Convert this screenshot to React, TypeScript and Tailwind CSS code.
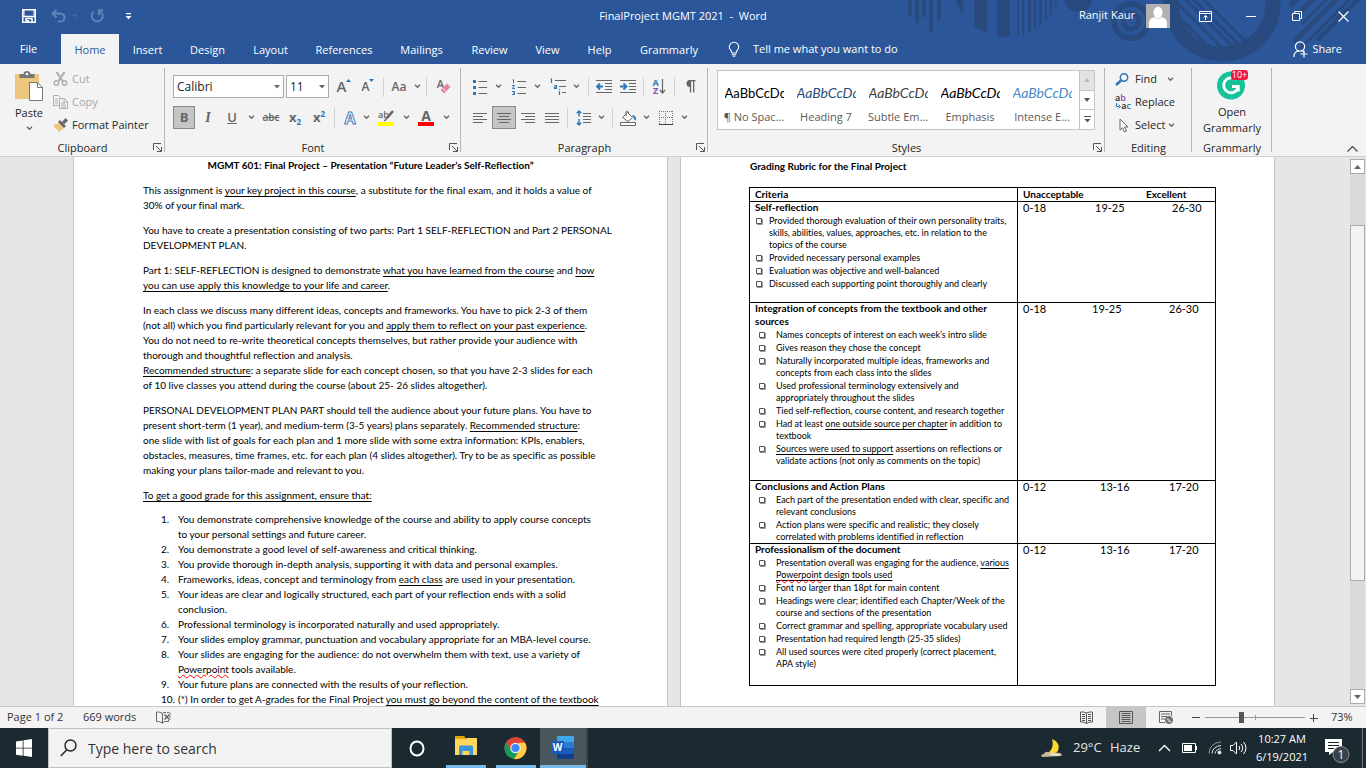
import type { ReactNode } from 'react'

const CHEVRON = 'M1 1l3 3 3-3'

function Chevron({ className = 'w-4' }: { className?: string }) {
  return (
    <button aria-label="More options" className={`${className} h-full flex items-center justify-center shrink-0`}>
      <svg width="7" height="5" viewBox="0 0 8 6" fill="none" stroke="#666" strokeWidth="1.6">
        <path d={CHEVRON} />
      </svg>
    </button>
  )
}

interface ToolProps {
  label: string
  className?: string
  active?: boolean
  children: ReactNode
}

function Tool({ label, className = 'w-6', active = false, children }: ToolProps) {
  return (
    <button
      aria-label={label}
      className={`${className} h-[23px] shrink-0 flex items-center justify-center text-[#666] ${
        active ? 'bg-[#c5c5c5] border border-[#8a8a8a]' : ''
      }`}
    >
      {children}
    </button>
  )
}

function Divider() {
  return <span className="w-px h-5 bg-[#d2d2d2] mx-[3px] shrink-0" />
}

function Group({ label, className, launcher = false, children }: { label: string; className: string; launcher?: boolean; children: ReactNode }) {
  return (
    <section aria-label={label} className={`${className} shrink-0 relative flex flex-col`}>
      <div className="flex-1">{children}</div>
      <div className="h-4 text-center leading-4">{label}</div>
      {launcher && (
        <button aria-label={`${label} settings`} className="absolute right-[3px] bottom-1">
          <svg width="9" height="9" viewBox="0 0 9 9" fill="none" stroke="#555">
            <path d="M.5 7V.5H8M3 3l5 5M8.500 4v4.500H4" />
          </svg>
        </button>
      )}
      <span className="absolute right-0 top-1 bottom-1 w-px bg-[#b5b5b5]" />
    </section>
  )
}

function Lines({ rows, width = 14 }: { rows: [number, number][]; width?: number }) {
  return (
    <svg width={width} height="12" viewBox={`0 0 ${width} 12`} stroke="#666">
      {rows.map(([from, to], i) => (
        <path key={i} d={`M${from} ${i * 3 + 1.5}H${to}`} />
      ))}
    </svg>
  )
}

const tabs = [
  { name: 'Home', width: 'w-[58px]' },
  { name: 'Insert', width: 'w-[57px]' },
  { name: 'Design', width: 'w-[63px]' },
  { name: 'Layout', width: 'w-[63px]' },
  { name: 'References', width: 'w-[84px]' },
  { name: 'Mailings', width: 'w-[71px]' },
  { name: 'Review', width: 'w-[65px]' },
  { name: 'View', width: 'w-[51px]' },
  { name: 'Help', width: 'w-[53px]' },
  { name: 'Grammarly', width: 'w-[86px]' },
]

function HeaderArt() {
  return (
    <svg className="absolute right-0 top-0" width="466" height="64" viewBox="900 0 466 64" fill="#284a7e" stroke="none">
      <defs>
        <clipPath id="stripeDisc">
          <circle cx="1007" cy="-17" r="54" />
        </clipPath>
        <clipPath id="ringHole">
          <circle cx="1222" cy="3" r="45" />
        </clipPath>
      </defs>
      <path d="M908 0h4v16h-4zM915 0h4v23h-4zM922 0h4v17h-4zM929 0h4v32h-4zM937 0h4v20h-4z" />
      <g clipPath="url(#stripeDisc)">
        <path d="M950 0h13v40h-13zM974 0h13v40h-13zM997 0h13v40h-13zM1017 0h2v40h-2zM1022 0h2v40h-2zM1028 0h3v40h-3zM1034 0h2v40h-2zM1039 0h3v40h-3zM1045 0h2v40h-2zM1050 0h2v40h-2zM1055 0h2v40h-2z" />
      </g>
      <circle cx="1078.500" cy="-2" r="14" />
      <g fill="none" stroke="#284a7e">
        <circle cx="1131" cy="21" r="17" strokeWidth="6" />
        <circle cx="1131" cy="21" r="8" strokeWidth="5" />
        <circle cx="1222" cy="3" r="51" strokeWidth="15" />
        <g clipPath="url(#ringHole)" strokeWidth="3">
          <path d="M1170 8l50 50M1176 2l54 54M1182 -4l56 56M1190 -4l54 54M1199 -5l54 54" />
        </g>
        <path strokeWidth="5" d="M1290 6l10-10M1295 17l22-22M1294 42l46-46M1317 40l44-44" />
        <path strokeWidth="3" d="M1302 24l28-28M1301 48l50-50" />
      </g>
    </svg>
  )
}

function TitleBar() {
  return (
    <header className="relative bg-[#2b579a] text-white text-[11px] shrink-0">
      <HeaderArt />
      <div className="relative h-[34px] flex items-start">
        <div className="flex-1 flex items-center h-8">
          <button aria-label="Save" className="ml-[22px]">
            <svg width="14" height="14" viewBox="0 0 14 14" fill="none" stroke="#fff" strokeWidth="1.500">
              <path d="M.75.75h12.500v12.500H.75zM.75 7.500h12.500" />
              <path d="M2 .8v6M12 .8v6" strokeWidth="1" />
              <path d="M4 13V9.500h6V13" />
              <path d="M5 11h2v2H5z" fill="#fff" stroke="none" />
            </svg>
          </button>
          <button aria-label="Undo" className="ml-[15px]">
            <svg width="15" height="14" viewBox="0 0 15 14" fill="none" stroke="#6083b8" strokeWidth="2">
              <path d="M5.500 1L1.500 4.500l4 4M2 4.500h7c6 0 6 8 0 8H7" />
            </svg>
          </button>
          <svg className="ml-[6px]" width="6" height="4" viewBox="0 0 8 6" fill="none" stroke="#6083b8" strokeWidth="1.500">
            <path d={CHEVRON} />
          </svg>
          <button aria-label="Redo" className="ml-[12px]">
            <svg width="15" height="14" viewBox="0 0 15 14" fill="none" stroke="#6083b8" strokeWidth="2">
              <path d="M4 2.500a5.500 5.500 0 1 0 6.500 0M13 1.200H9v5" />
            </svg>
          </button>
          <button aria-label="Customize Quick Access Toolbar" className="ml-5">
            <svg width="7" height="7" viewBox="0 0 7 7" fill="#fff">
              <path d="M1 0h5v1.200H1zM.5 3h6L3.500 6.200z" />
            </svg>
          </button>
        </div>
        <h1 className="h-8 leading-8 whitespace-pre">FinalProject MGMT 2021  -  Word</h1>
        <div className="flex-1 flex items-center justify-end h-8">
          <span className="pb-0.5">Ranjit Kaur</span>
          <svg className="ml-[11px]" width="24" height="24" viewBox="0 0 24 24">
            <path fill="#b1b1b1" d="M0 0h24v24H0z" />
            <path fill="#fff" d="M3 24v-4.500Q3 14 8 13.200h8q5 .8 5 6.300V24z" />
            <ellipse cx="12" cy="8.500" rx="4.800" ry="6" fill="#fff" stroke="#b1b1b1" strokeWidth=".5" />
          </svg>
          <button aria-label="Ribbon display options" className="w-[46px] ml-3 flex justify-center">
            <svg width="13" height="11" viewBox="0 0 13 11" fill="none" stroke="#fff">
              <path d="M.5.5h12v10H.5zM.5 2.500h12M6.500 9V4.500M4.500 6.500l2-2 2 2" />
            </svg>
          </button>
          <button aria-label="Minimize" className="w-[46px] flex justify-center">
            <span className="w-[10px] h-px bg-white" />
          </button>
          <button aria-label="Restore" className="w-[46px] flex justify-center">
            <svg width="10" height="10" viewBox="0 0 10 10" fill="none" stroke="#fff">
              <path d="M.5 2.500h7v7h-7zM2.500 2V.5h7v7H8" />
            </svg>
          </button>
          <button aria-label="Close" className="w-[46px] flex justify-center">
            <svg width="11" height="11" viewBox="0 0 11 11" stroke="#fff" strokeWidth="1.200">
              <path d="M.5.5l10 10M10.500.5l-10 10" />
            </svg>
          </button>
        </div>
      </div>
      <nav className="relative h-[30px] flex items-center">
        <button className="w-[61px] h-full pr-1">File</button>
        {tabs.map((tab) => (
          <button
            key={tab.name}
            className={`${tab.width} h-full pt-0.5 shrink-0 ${tab.name === 'Home' ? 'bg-[#f3f3f3] text-[#2b579a]' : ''}`}
          >
            {tab.name}
          </button>
        ))}
        <button className="flex items-center ml-4 h-full">
          <svg width="12" height="17" viewBox="0 0 14 17" fill="none" stroke="#fff" strokeWidth="1.200">
            <path d="M4.500 12.500c0-3-3-3.500-3-7a5.500 5.500 0 0 1 11 0c0 3.500-3 4-3 7zM4.500 14.500h5M5.500 16.400h3" />
          </svg>
          <span className="ml-[13px]">Tell me what you want to do</span>
        </button>
        <button className="ml-auto mr-6 flex items-center h-full">
          <svg width="15" height="17" viewBox="0 0 15 17" fill="none" stroke="#fff" strokeWidth="1.200">
            <circle cx="7" cy="5.500" r="4.600" />
            <path d="M.8 16c0-3.500 2-5.500 5-6M9 9l1.500 2M11 9.500v7M7.500 13h7" />
          </svg>
          <span className="ml-1">Share</span>
        </button>
      </nav>
    </header>
  )
}

function ClipboardGroup() {
  return (
    <Group label="Clipboard" className="w-[165px]" launcher>
      <div className="flex pl-[13px] pt-[7px]">
        <button className="flex flex-col items-center w-8">
          <svg width="30" height="31" viewBox="0 0 30 31">
            <path fill="#eec77f" d="M1 3h24v25H1z" />
            <path fill="#777" d="M5 3h4c0-4 7-4 7 0h4v4H5z" transform="translate(.5 0)" />
            <circle cx="13" cy="3" r="1.300" fill="#fff" />
            <path fill="#fff" stroke="#777" d="M15.500 11.500h8l5 5v13h-13z" />
            <path fill="none" stroke="#777" d="M23.500 11.500v5h5" />
          </svg>
          <span className="leading-4 mt-[3px]">Paste</span>
          <svg className="mt-[5px]" width="7" height="5" viewBox="0 0 8 6" fill="none" stroke="#666" strokeWidth="1.600">
            <path d={CHEVRON} />
          </svg>
        </button>
        <div className="flex flex-col ml-2 gap-[7px]">
          <button className="flex items-center gap-1 h-4 text-[#a8a8a8]">
            <svg width="15" height="14" viewBox="0 0 15 14" fill="none" stroke="#b0b0b0" strokeWidth="1.500">
              <path d="M3.500 0L9.500 9M11.500 0L5.500 9" strokeWidth="2.200" />
              <circle cx="3.500" cy="11" r="2.300" />
              <circle cx="11.500" cy="11" r="2.300" />
            </svg>
            Cut
          </button>
          <button className="flex items-center gap-1 h-4 text-[#a8a8a8]">
            <svg width="15" height="14" viewBox="0 0 15 14" fill="#f3f3f3" stroke="#b0b0b0">
              <path d="M.5.5h5l2 2v8h-7zM2 4h3M2 6h3M2 8h3" />
              <path d="M6.500 3.500h5l3 3v7h-8zM11 3.500v3.500h3.500M8 8h4M8 10h5M8 12h5" />
            </svg>
            Copy
          </button>
          <button className="flex items-center gap-1 h-4 text-[#262626] whitespace-nowrap">
            <svg width="15" height="14" viewBox="0 0 15 14">
              <path fill="#eec77f" d="M0 7l6-2 5 5-5 4z" />
              <path fill="#666" d="M5 4l2-2 6 6-2 2zM9 4l3.500-4L15 2.500 11.500 6z" />
            </svg>
            Format Painter
          </button>
        </div>
      </div>
    </Group>
  )
}

function Combo({ label, value, className }: { label: string; value: string; className: string }) {
  return (
    <div className={`${className} relative h-[23px] shrink-0`}>
      <select aria-label={label} className="appearance-none w-full h-full bg-white border border-[#ababab] pl-[3px] text-[12px] text-[#222] leading-5">
        <option>{value}</option>
      </select>
      <svg className="absolute right-1 top-[10px] pointer-events-none" width="6" height="4" viewBox="0 0 6 4" fill="#666">
        <path d="M0 0h6L3 3.500z" />
      </svg>
    </div>
  )
}

function FontGroup() {
  return (
    <Group label="Font" className="w-[296px]" launcher>
      <div className="flex items-center pl-2 pt-[11px]">
        <Combo label="Font family" value="Calibri" className="w-[111px]" />
        <Combo label="Font size" value="11" className="w-[43px] ml-0.5 mr-[3px]" />
        <Tool label="Grow font">
          <span className="text-[15px] leading-none font-semibold">A</span>
          <svg className="mb-3" width="5" height="3" viewBox="0 0 5 3" fill="#2e75b5"><path d="M0 3h5L2.500 0z" /></svg>
        </Tool>
        <Tool label="Shrink font">
          <span className="text-[12px] leading-none font-semibold">A</span>
          <svg className="mb-3" width="5" height="3" viewBox="0 0 5 3" fill="#2e75b5"><path d="M0 0h5L2.500 3z" /></svg>
        </Tool>
        <Divider />
        <Tool label="Change case"><span className="text-[12px] font-semibold">Aa</span></Tool>
        <Chevron className="w-3" />
        <Divider />
        <Tool label="Clear formatting" className="w-7">
          <span className="text-[11px] leading-none font-semibold mb-1.5">A</span>
          <svg className="-ml-1 mt-1" width="11" height="11" viewBox="0 0 11 11">
            <path fill="#e8839b" d="M.5 7L7 .5 10.500 4 4 10.500z" />
            <path stroke="#f3f3f3" d="M2 4.500l4 4" />
          </svg>
        </Tool>
      </div>
      <div className="flex items-center pl-2 pt-2">
        <Tool label="Bold" active className="w-[22px]"><span className="font-bold text-[13px]">B</span></Tool>
        <Tool label="Italic" className="w-[26px]"><span className="font-['Liberation_Serif',serif] italic font-bold text-[14px]">I</span></Tool>
        <Tool label="Underline" className="w-[22px]"><span className="font-semibold text-[13px] underline">U</span></Tool>
        <Chevron />
        <Tool label="Strikethrough"><span className="font-semibold text-[10px] line-through">abc</span></Tool>
        <Tool label="Subscript"><span className="font-bold text-[13px]">x</span><span className="text-[8px] font-bold text-[#2e75b5] mt-2">2</span></Tool>
        <Tool label="Superscript"><span className="font-bold text-[13px]">x</span><span className="text-[8px] font-bold text-[#2e75b5] mb-2">2</span></Tool>
        <Divider />
        <Tool label="Text effects">
          <span className="text-[16px] leading-none font-bold text-white [-webkit-text-stroke:1px_#4a7fc0]">A</span>
        </Tool>
        <Chevron className="w-2" />
        <Tool label="Text highlight color" className="w-8">
          <span className="relative w-4 h-4 block border-b-4 border-[#ff0] text-left">
            <span className="block text-[9px] leading-[9px] font-semibold">ab</span>
            <svg className="absolute right-0 top-0" width="11" height="12" viewBox="0 0 11 12" stroke="#666">
              <path d="M10 1L4 8" strokeWidth="2.600" />
              <path d="M4 8l-2.500 3" strokeWidth="1.600" />
            </svg>
          </span>
        </Tool>
        <Chevron className="w-2" />
        <Tool label="Font color" className="w-8">
          <span className="w-4 h-4 block border-b-4 border-[#f00] text-[14px] leading-[12px] font-bold">A</span>
        </Tool>
        <Chevron className="w-2" />
      </div>
    </Group>
  )
}

function ListIcon({ marks }: { marks: ReactNode }) {
  return (
    <svg width="15" height="16" viewBox="0 0 15 16" fill="#2e75b5">
      {marks}
      <path stroke="#666" d="M5.500 2.500H14M5.500 8.500H14M5.500 14.500H14" />
    </svg>
  )
}

function IndentIcon({ arrow }: { arrow: string }) {
  return (
    <svg width="17" height="13" viewBox="0 0 17 13" fill="none">
      <path stroke="#666" d="M0 .5h16M9 3.500h7M9 6.500h7M9 9.500h7M0 12.500h16" />
      <path stroke="#2e75b5" strokeWidth="1.800" d={arrow} />
    </svg>
  )
}

function ParagraphGroup() {
  return (
    <Group label="Paragraph" className="w-[247px]" launcher>
      <div className="flex items-center pl-[7px] pt-[11px]">
        <Tool label="Bullets">
          <ListIcon marks={<path d="M0 1h3v3H0zM0 7h3v3H0zM0 13h3v3H0z" />} />
        </Tool>
        <Chevron className="w-3" />
        <span className="w-[3px]" />
        <Tool label="Numbering">
          <ListIcon marks={<path fill="none" stroke="#2e75b5" d="M.5.8h1v3.500M0 6.500h2.500L.5 9.500H3M0 12.500h2.500v3H0M1 14h1.500" />} />
        </Tool>
        <Chevron className="w-3" />
        <span className="w-[3px]" />
        <Tool label="Multilevel list">
          <svg width="17" height="17" viewBox="0 0 17 17" fill="none" stroke="#2e75b5">
            <path d="M.5 1h1v4M4.500 7.500h2v3h-2v-1.500h2M9.500 11v1M9.500 13v4" strokeWidth="1.200" />
            <path stroke="#666" d="M5 2.500h11M9 8.500h7M12 14.500h4" />
          </svg>
        </Tool>
        <Chevron className="w-3" />
        <span className="w-[3px]" />
        <Divider />
        <Tool label="Decrease indent"><IndentIcon arrow="M7 6.500H2M4 3.500l-3 3 3 3" /></Tool>
        <Tool label="Increase indent"><IndentIcon arrow="M0 6.500h5M3.500 3.500l3 3-3 3" /></Tool>
        <Divider />
        <Tool label="Sort">
          <span className="flex flex-col text-[9px] leading-[8px] font-bold">
            <span className="text-[#2e75b5]">A</span>
            <span className="text-[#8b4bb0]">Z</span>
          </span>
          <svg width="7" height="17" viewBox="0 0 7 17" fill="none" stroke="#666" strokeWidth="1.200">
            <path d="M3.500 1v14M1 12l2.500 3L6 12" />
          </svg>
        </Tool>
        <Divider />
        <Tool label="Show paragraph marks">
          <svg width="11" height="13" viewBox="0 0 11 13" fill="none" stroke="#666" strokeWidth="1.300">
            <path fill="#666" stroke="none" d="M5 0a3.500 3.500 0 0 0 0 7z" />
            <path d="M4 .6h6.500M5.500 0v12.500M8.700 0v12.500" />
          </svg>
        </Tool>
      </div>
      <div className="flex items-center pl-[7px] pt-2">
        <Tool label="Align left"><Lines rows={[[0, 14], [0, 10], [0, 14], [0, 10]]} /></Tool>
        <Tool label="Center" active><Lines rows={[[0, 14], [2, 12], [0, 14], [2, 12]]} /></Tool>
        <Tool label="Align right"><Lines rows={[[0, 14], [4, 14], [0, 14], [4, 14]]} /></Tool>
        <Tool label="Justify"><Lines rows={[[0, 14], [0, 14], [0, 14], [0, 14]]} /></Tool>
        <Divider />
        <Tool label="Line spacing">
          <svg width="15" height="16" viewBox="0 0 15 16" fill="none">
            <path stroke="#2e75b5" strokeWidth="1.400" d="M3 1v5.500M.8 3.200L3 1l2.200 2.200M3 9v6M.8 12.800L3 15l2.200-2.200" />
            <path stroke="#666" d="M7 3.500h8M7 6.500h8M7 9.500h8M7 12.500h8" />
          </svg>
        </Tool>
        <Chevron className="w-3" />
        <span className="w-0.5" />
        <Divider />
        <Tool label="Shading">
          <svg width="17" height="16" viewBox="0 0 17 16" fill="none" stroke="#666">
            <path fill="#fff" d="M2.500 7.500l5-5 5 5-4.500 4z" />
            <path d="M6 6V2Q7 0 8.500 2v2" />
            <path fill="#2e75b5" stroke="none" d="M12 5q4 0 4 4.500v1q-2 0-2-2z" />
            <path fill="#fff" d="M.5 12.500h15v3H.5z" />
          </svg>
        </Tool>
        <Chevron className="w-3" />
        <span className="w-0.5" />
        <Tool label="Borders">
          <svg width="14" height="14" viewBox="0 0 14 14" fill="none" stroke="#777">
            <path strokeDasharray="1 1" d="M0 .5h14M.5 0v13M13.500 0v13M6.500 0v13M0 6.500h14" />
            <path stroke="#444" d="M0 13.500h14" />
          </svg>
        </Tool>
        <Chevron className="w-3" />
      </div>
    </Group>
  )
}

const styles = [
  { name: '¶ No Spac...', sample: 'text-[13px] text-black' },
  { name: 'Heading 7', sample: 'text-[14px] italic text-[#1f4e79]' },
  { name: 'Subtle Em...', sample: 'text-[14px] italic text-[#404040]' },
  { name: 'Emphasis', sample: 'text-[14px] italic text-black' },
  { name: 'Intense E...', sample: 'text-[14px] italic text-[#4a86c8]' },
]

function StylesGroup() {
  return (
    <Group label="Styles" className="w-[397px]" launcher>
      <div className="flex ml-[9px] mr-[10px] mt-[6px] h-[60px] border border-[#c6c6c6] bg-white">
        {styles.map((style) => (
          <button key={style.name} className="w-[72px] shrink-0 flex flex-col items-center pt-3">
            <span className={`w-[59px] overflow-hidden whitespace-nowrap text-left font-['Lato',sans-serif] leading-5 ${style.sample}`}>
              AaBbCcDd
            </span>
            <span className="mt-1 leading-5 text-[#5a5a5a] whitespace-nowrap">{style.name}</span>
          </button>
        ))}
        <div className="ml-auto w-[15px] flex flex-col divide-y divide-[#c6c6c6] border-l border-[#c6c6c6]">
          <button aria-label="Previous styles" className="flex-1 bg-[#e3e3e3] flex items-center justify-center">
            <svg width="6" height="4" viewBox="0 0 6 4" fill="#bbb"><path d="M0 4h6L3 0z" /></svg>
          </button>
          <button aria-label="Next styles" className="flex-1 flex items-center justify-center">
            <svg width="6" height="4" viewBox="0 0 6 4" fill="#555"><path d="M0 0h6L3 4z" /></svg>
          </button>
          <button aria-label="All styles" className="flex-1 flex items-center justify-center">
            <svg width="7" height="7" viewBox="0 0 7 7" fill="#555"><path d="M0 0h7v1H0zM.5 3h6L3.500 6.500z" /></svg>
          </button>
        </div>
      </div>
    </Group>
  )
}

function EditingGroup() {
  return (
    <Group label="Editing" className="w-[87px]">
      <div className="flex flex-col gap-[7px] pl-[10px] pt-[7px]">
        <div className="flex items-center h-4">
          <button className="flex items-center gap-[6px]">
            <svg width="14" height="13" viewBox="0 0 14 13" fill="none" stroke="#2e75b5">
              <circle cx="9" cy="4.500" r="3.700" strokeWidth="1.500" />
              <path d="M6 7.500L1 12" strokeWidth="2.500" />
            </svg>
            Find
          </button>
          <Chevron className="w-7" />
        </div>
        <button className="flex items-center gap-1 h-4">
          <span className="w-4 flex flex-col text-[9px] leading-[8px] font-semibold">
            <span className="text-left">a<span className="text-[#8b4bb0]">b</span></span>
            <span className="flex items-center justify-end">
              <svg width="5" height="6" viewBox="0 0 5 6" fill="none" stroke="#2e75b5"><path d="M.5 0v3.500h3M2.500 1.500l2 2-2 2" /></svg>
              a<span className="text-[#2e75b5]">c</span>
            </span>
          </span>
          Replace
        </button>
        <div className="flex items-center h-4">
          <button className="flex items-center gap-[6px] pl-1">
            <svg width="10" height="15" viewBox="0 0 10 15" fill="#fff" stroke="#666">
              <path d="M1 1v11l2.500-2.200L5.500 14l2-1-2-4H9z" />
            </svg>
            Select
          </button>
          <Chevron className="w-3" />
        </div>
      </div>
    </Group>
  )
}

function Ribbon() {
  return (
    <div className="h-[93px] shrink-0 flex bg-[#f3f3f3] border-b border-[#d0d0d0] text-[#262626] text-[11px]">
      <ClipboardGroup />
      <FontGroup />
      <ParagraphGroup />
      <StylesGroup />
      <EditingGroup />
      <Group label="Grammarly" className="w-[80px]">
        <button className="w-full flex flex-col items-center leading-4 pt-[6px]">
          <svg width="32" height="30" viewBox="0 0 32 30" className="mb-1 mr-px">
            <circle cx="15" cy="15.500" r="14" fill="#15c39a" />
            <path fill="none" stroke="#fff" strokeWidth="2.800" d="M20 9.500a7.500 7.500 0 1 0 2.300 8M16 16.500h6.300v5" />
            <rect x="15" width="17" height="10" rx="3" fill="#ee1a43" />
            <text x="23.500" y="8.300" fill="#fff" fontSize="9" textAnchor="middle">10+</text>
          </svg>
          <span>Open</span>
          <span>Grammarly</span>
        </button>
      </Group>
      <div className="flex-1 flex justify-end items-end">
        <button aria-label="Collapse the ribbon" className="mr-2 mb-1">
          <svg width="11" height="6" viewBox="0 0 11 6" fill="none" stroke="#444" strokeWidth="1.200"><path d="M.5 5.500l5-5 5 5" /></svg>
        </button>
      </div>
    </div>
  )
}

function U({ children }: { children: ReactNode }) {
  return <span className="underline decoration-1 underline-offset-2">{children}</span>
}

function Misspelled({ children }: { children: ReactNode }) {
  return <span className="underline decoration-wavy decoration-1 decoration-[#f00] underline-offset-1">{children}</span>
}

const instructions: ReactNode[] = [
  <>You demonstrate comprehensive knowledge of the course and ability to apply course concepts<br />to your personal settings and future career.</>,
  'You demonstrate a good level of self-awareness and critical thinking.',
  'You provide thorough in-depth analysis, supporting it with data and personal examples.',
  <>Frameworks, ideas, concept and terminology from <U>each class</U> are used in your presentation.</>,
  <>Your ideas are clear and logically structured, each part of your reflection ends with a solid<br />conclusion.</>,
  'Professional terminology is incorporated naturally and used appropriately.',
  'Your slides employ grammar, punctuation and vocabulary appropriate for an MBA-level course.',
  <>Your slides are engaging for the audience: do not overwhelm them with text, use a variety of<br /><Misspelled>Powerpoint</Misspelled> tools available.</>,
  'Your future plans are connected with the results of your reflection.',
  <>(*) In order to get A-grades for the Final Project <U>you must go beyond the content of the textbook</U></>,
]

function AssignmentPage() {
  return (
    <article className="w-[595px] shrink-0 bg-white border-x border-[#c6c6c6] px-[69px] pt-px text-[10px] leading-[15px] whitespace-nowrap">
      <div className="flex flex-col gap-[10px]">
        <h2 className="font-bold text-center">MGMT 601: Final Project – Presentation “Future Leader’s Self-Reflection”</h2>
        <p>
          This assignment is <U>your key project in this course</U>, a substitute for the final exam, and it holds a value of<br />
          30% of your final mark.
        </p>
        <p>
          You have to create a presentation consisting of two parts: Part 1 SELF-REFLECTION and Part 2 PERSONAL<br />
          DEVELOPMENT PLAN.
        </p>
        <p>
          Part 1: SELF-REFLECTION is designed to demonstrate <U>what you have learned from the course</U> and <U>how</U><br />
          <U>you can use apply this knowledge to your life and career</U>.
        </p>
        <p>
          In each class we discuss many different ideas, concepts and frameworks. You have to pick 2-3 of them<br />
          (not all) which you find particularly relevant for you and <U>apply them to reflect on your past experience</U>.<br />
          You do not need to re-write theoretical concepts themselves, but rather provide your audience with<br />
          thorough and thoughtful reflection and analysis.<br />
          <U>Recommended structure</U>: a separate slide for each concept chosen, so that you have 2-3 slides for each<br />
          of 10 live classes you attend during the course (about 25- 26 slides altogether).
        </p>
        <p>
          PERSONAL DEVELOPMENT PLAN PART should tell the audience about your future plans. You have to<br />
          present short-term (1 year), and medium-term (3-5 years) plans separately. <U>Recommended structure</U>:<br />
          one slide with list of goals for each plan and 1 more slide with some extra information: KPIs, enablers,<br />
          obstacles, measures, time frames, etc. for each plan (4 slides altogether). Try to be as specific as possible<br />
          making your plans tailor-made and relevant to you.
        </p>
        <p><U>To get a good grade for this assignment, ensure that:</U></p>
      </div>
      <ol className="mt-[9px]">
        {instructions.map((text, i) => (
          <li key={i} className="flex pl-[18px]">
            <span className="w-[17px] shrink-0">{i + 1}.</span>
            <span>{text}</span>
          </li>
        ))}
      </ol>
    </article>
  )
}

interface Criterion {
  title: ReactNode
  height: string
  box: string
  items: ReactNode[]
  scores: [string, string, string]
  stops: [string, string]
}

const rubric: Criterion[] = [
  {
    title: 'Self-reflection',
    height: 'h-[101px]',
    box: 'pl-px w-[14px]',
    items: [
      <>Provided thorough evaluation of their own personality traits,<br />skills, abilities, values, approaches, etc. in relation to the<br />topics of the course</>,
      'Provided necessary personal examples',
      'Evaluation was objective and well-balanced',
      'Discussed each supporting point thoroughly and clearly',
    ],
    scores: ['0-18', '19-25', '26-30'],
    stops: ['w-[72px]', 'w-[77px]'],
  },
  {
    title: <>Integration of concepts from the textbook and other<br />sources</>,
    height: 'h-[178px]',
    box: 'pl-1 w-[21px]',
    items: [
      'Names concepts of interest on each week’s intro slide',
      'Gives reason they chose the concept',
      <>Naturally incorporated multiple ideas, frameworks and<br />concepts from each class into the slides</>,
      <>Used professional terminology extensively and<br />appropriately throughout the slides</>,
      'Tied self-reflection, course content, and research together',
      <>Had at least <U>one outside source per chapter</U> in addition to<br />textbook</>,
      <><U>Sources were used to support</U> assertions on reflections or<br />validate actions (not only as comments on the topic)</>,
    ],
    scores: ['0-18', '19-25', '26-30'],
    stops: ['w-[69px]', 'w-[77px]'],
  },
  {
    title: 'Conclusions and Action Plans',
    height: 'h-[63px]',
    box: 'pl-1 w-[21px]',
    items: [
      <>Each part of the presentation ended with clear, specific and<br />relevant conclusions</>,
      <>Action plans were specific and realistic; they closely<br />correlated with problems identified in reflection</>,
    ],
    scores: ['0-12', '13-16', '17-20'],
    stops: ['w-[77px]', 'w-[69px]'],
  },
  {
    title: 'Professionalism of the document',
    height: 'h-[142px]',
    box: 'pl-1 w-[21px]',
    items: [
      <>Presentation overall was engaging for the audience, <U>various</U><br /><U><Misspelled>Powerpoint</Misspelled> design tools used</U></>,
      'Font no larger than 18pt for main content',
      <>Headings were clear; identified each Chapter/Week of the<br />course and sections of the presentation</>,
      'Correct grammar and spelling, appropriate vocabulary used',
      'Presentation had required length (25-35 slides)',
      <>All used sources were cited properly (correct placement,<br />APA style)</>,
    ],
    scores: ['0-12', '13-16', '17-20'],
    stops: ['w-[77px]', 'w-[69px]'],
  },
]

function RubricPage() {
  return (
    <article className="w-[595px] shrink-0 bg-white border-x border-[#c6c6c6] pl-[68px] pr-[58px] pt-[2px] text-[10px] whitespace-nowrap">
      <h2 className="font-bold leading-[15px] pl-px">Grading Rubric for the Final Project</h2>
      <table className="mt-[13px] w-full table-fixed border-collapse border border-black">
        <colgroup>
          <col className="w-[268px]" />
          <col />
        </colgroup>
        <thead>
          <tr className="h-[14px] leading-[13px] text-left">
            <th className="border border-black py-0 px-[5px]">Criteria</th>
            <th className="border border-black py-0 px-[5px]">
              <div className="flex">
                <span className="w-[123px]">Unacceptable</span>
                <span>Excellent</span>
              </div>
            </th>
          </tr>
        </thead>
        <tbody>
          {rubric.map((row, i) => (
            <tr key={i} className={`${row.height} align-top`}>
              <td className="border border-black py-0 px-[5px]">
                <h3 className="font-bold leading-[13px] -mt-px">{row.title}</h3>
                <ul className="text-[9px] leading-[12px]">
                  {row.items.map((item, j) => (
                    <li key={j} className="flex pt-px">
                      <span className={`${row.box} h-3 shrink-0 flex items-center`}>
                        <svg width="7" height="7" viewBox="0 0 7 7" fill="none" stroke="#555">
                          <path d="M.5.5h5v5h-5z" />
                          <path d="M6.500 1v5.500H1" stroke="#999" />
                        </svg>
                      </span>
                      <span>{item}</span>
                    </li>
                  ))}
                </ul>
              </td>
              <td className="border border-black py-0 px-[5px]">
                <div className="flex text-[11px] leading-[13px] -mt-px">
                  <span className={row.stops[0]}>{row.scores[0]}</span>
                  <span className={row.stops[1]}>{row.scores[1]}</span>
                  <span>{row.scores[2]}</span>
                </div>
              </td>
            </tr>
          ))}
        </tbody>
      </table>
    </article>
  )
}

function Scrollbar() {
  return (
    <div className="w-[15px] mr-px my-[2px] shrink-0 flex flex-col bg-[#dadada]">
      <button aria-label="Scroll up" className="h-[15px] bg-white border border-[#ababab] flex items-center justify-center">
        <svg width="7" height="4" viewBox="0 0 7 4" fill="#666"><path d="M0 4h7L3.500 0z" /></svg>
      </button>
      <div className="h-[51px]" />
      <div className="flex-1 bg-[#f3f3f3] border border-[#ababab]" />
      <div className="h-[108px]" />
      <button aria-label="Scroll down" className="h-[15px] bg-white border border-[#ababab] flex items-center justify-center">
        <svg width="7" height="4" viewBox="0 0 7 4" fill="#666"><path d="M0 0h7L3.500 4z" /></svg>
      </button>
    </div>
  )
}

function StatusBar() {
  return (
    <footer className="h-[22px] shrink-0 flex items-center bg-[#f3f3f3] border-t border-[#c6c6c6] text-[11px] text-[#333]">
      <span className="w-[76px] pl-[7px]">Page 1 of 2</span>
      <span className="w-20 pl-[7px]">669 words</span>
      <button aria-label="Proofing">
        <svg width="15" height="13" viewBox="0 0 15 13" fill="none" stroke="#666">
          <path d="M6.500 2.500Q3.500.5.500 1v9.500q3-.5 6 1.500zM6.500 2.500L8 1.500M6.500 12l2-1.500h4V9" />
          <path strokeWidth="1.500" d="M8.500 3.500l5 5M13.500 3.500l-5 5" />
          <path strokeDasharray="2 1" d="M8 1.500h6v7" />
        </svg>
      </button>
      <div className="ml-auto flex items-center h-full">
        <button aria-label="Read mode" className="w-10 h-full flex items-center justify-center">
          <svg width="13" height="13" viewBox="0 0 13 13" fill="none" stroke="#555">
            <path d="M6.500 2Q3.500.5.500 1v10q3-.5 6 1.500 3-2 6-1.500V1q-3-.5-6 1zM6.500 2v10M2 3.500h3M2 5.500h3M2 7.500h3M2 9.500h3M8 3.500h3M8 5.500h3M8 7.500h3M8 9.500h3" />
          </svg>
        </button>
        <button aria-label="Print layout" className="w-10 h-full flex items-center justify-center bg-[#c6c6c6]">
          <svg width="14" height="13" viewBox="0 0 14 13" fill="none" stroke="#555">
            <path d="M.5.5h13v12H.5zM2.500 2.500h9M2.500 4.500h9M2.500 6.500h9M2.500 8.500h9M2.500 10.500h9" />
          </svg>
        </button>
        <button aria-label="Web layout" className="w-10 h-full flex items-center justify-center">
          <svg width="14" height="13" viewBox="0 0 14 13" fill="none" stroke="#666">
            <path d="M6 11.500H.5V.5h12V5M2 3h9M2 5.500h6M2 8h4" />
            <circle cx="10" cy="9" r="3.500" fill="#777" />
            <path stroke="#f3f3f3" d="M8 8q2 0 2 2t2 0" />
          </svg>
        </button>
        <button aria-label="Zoom out" className="ml-[5px] w-[9px] flex justify-center"><span className="w-2 h-px bg-[#444]" /></button>
        <div className="relative flex items-center ml-[5px] w-[100px]">
          <span className="absolute left-[50px] w-px h-[5px] bg-[#999]" />
          <input
            type="range"
            aria-label="Zoom level"
            min={0}
            max={100}
            defaultValue={36}
            className="relative w-full h-3 appearance-none bg-transparent [&::-webkit-slider-runnable-track]:h-px [&::-webkit-slider-runnable-track]:bg-[#999] [&::-webkit-slider-thumb]:appearance-none [&::-webkit-slider-thumb]:w-[5px] [&::-webkit-slider-thumb]:h-[11px] [&::-webkit-slider-thumb]:-mt-[5px] [&::-webkit-slider-thumb]:bg-[#555]"
          />
        </div>
        <button aria-label="Zoom in" className="ml-[5px]">
          <svg width="8" height="8" viewBox="0 0 8 8" stroke="#444"><path d="M0 4.500h8M3.500 0v8" /></svg>
        </button>
        <span className="w-12 pl-[13px]">73%</span>
      </div>
    </footer>
  )
}

function Taskbar() {
  return (
    <div className="h-10 shrink-0 flex items-center bg-[#1b2a30] text-white">
      <button aria-label="Start" className="w-12 h-full flex items-center justify-center">
        <svg width="16" height="18" viewBox="0 0 16 16" preserveAspectRatio="none" fill="#fff">
          <path d="M0 2.200L6.700 1.300v6.400H0zM7.500 1.200L16 0v7.700H7.500zM0 8.500h6.700v6.300L0 13.900zM7.500 8.500H16V16l-8.500-1.200z" />
        </svg>
      </button>
      <label className="w-[344px] h-full bg-[#f2f2f2] border border-[#c0c0c0] flex items-center pl-[11px] gap-[11px]">
        <svg width="17" height="18" viewBox="0 0 17 18" fill="none" stroke="#222" strokeWidth="1.400">
          <circle cx="10.500" cy="6.500" r="5.500" />
          <path d="M6.800 10.800L.8 17" />
        </svg>
        <input aria-label="Search" placeholder="Type here to search" className="flex-1 min-w-0 bg-transparent text-[14px] placeholder:text-[#333] outline-none" />
      </label>
      <button aria-label="Cortana" className="w-[49px] h-full flex items-center justify-center">
        <svg width="16" height="17" viewBox="0 0 16 17" fill="none" stroke="#fff" strokeWidth="2"><ellipse cx="8" cy="8.500" rx="6.500" ry="7" /></svg>
      </button>
      <button aria-label="File Explorer" className="w-[50px] h-full flex flex-col items-center justify-end">
        <svg className="mb-[9px]" width="22" height="20" viewBox="0 0 22 20">
          <path fill="#e5a50a" d="M0 0h9l2 2.500v3H0z" />
          <path fill="#ffd75e" d="M0 3h10l2-1h10v17H0z" />
          <path fill="#3a96dd" d="M4 19v-8q0-1.500 1.500-1.500h11Q18 9.500 18 11v8h-3.500v-4h-7v4z" />
        </svg>
        <span className="w-10 h-[3px] bg-[#76b9ed]" />
      </button>
      <button aria-label="Google Chrome" className="w-[49px] h-full flex flex-col items-center justify-end">
        <svg className="mb-[5px]" width="23" height="24" viewBox="0 0 24 24">
          <circle cx="12" cy="12" r="11.500" fill="#db4437" />
          <path fill="#0f9d58" d="M2 6.200a11.500 11.500 0 0 0 8.500 17.200L15.500 15 7 14z" />
          <path fill="#ffcd40" d="M22 6.500a11.500 11.500 0 0 1-11.500 17L16 15l-.5-8.500z" />
          <circle cx="12" cy="12" r="5.500" fill="#f1f1f1" />
          <circle cx="12" cy="12" r="4.300" fill="#4285f4" />
        </svg>
        <span className="w-10 h-[3px] bg-[#76b9ed]" />
      </button>
      <button aria-label="Word" className="w-12 h-full flex flex-col items-center justify-end bg-[#4a575c] border-r-2 border-[#39464b]">
        <svg className="mb-[5px]" width="24" height="24" viewBox="0 0 24 24">
          <path fill="#41a5ee" d="M6 0h17v6H6z" />
          <path fill="#2b7cd3" d="M6 6h17v6H6z" />
          <path fill="#185abd" d="M6 12h17v6H6z" />
          <path fill="#103f91" d="M6 18h17v5H6z" />
          <path fill="#185abd" d="M0 5h13v13H0z" />
          <text x="6.500" y="15" fill="#fff" fontSize="10" fontWeight="bold" textAnchor="middle">W</text>
        </svg>
        <span className="w-full h-[3px] bg-[#76b9ed]" />
      </button>
      <div className="ml-auto h-full flex items-center">
        <svg width="22" height="20" viewBox="0 0 22 20">
          <path fill="#fdd835" d="M11 1c9 3 9 14 0 16H4C11 13 13 8 11 1z" />
          <path fill="#c9b8a2" d="M2 19c-3 0-2-3 1-3 1-3 5-3 6 0 3-1 3-2 7-1 4-1 6 2 4 3z" />
          <path fill="#eee3d6" d="M9 17c1-3 4-2 5-1 2-1 5 0 4 2z" />
        </svg>
        <span className="ml-[10px] w-[37px] text-[13px] text-[#e4e7e8]">29°C</span>
        <span className="text-[13px] w-[41px] text-[#e4e7e8]">Haze</span>
        <button aria-label="Show hidden icons" className="w-[26px] flex justify-center">
          <svg width="13" height="8" viewBox="0 0 13 8" fill="none" stroke="#fff" strokeWidth="1.300"><path d="M1 7l5.500-5.500L12 7" /></svg>
        </button>
        <svg className="ml-[5px]" width="16" height="10" viewBox="0 0 16 10" fill="none" stroke="#fff">
          <path d="M.5.5h13v9H.5zM14.500 3v4" />
          <path fill="#fff" stroke="none" d="M2 2h8v6H2z" />
        </svg>
        <svg className="ml-[10px]" width="14" height="14" viewBox="0 0 14 14" fill="none" stroke="#e4e7e8">
          <path stroke="#8d979b" d="M1 12.500Q1.500 2 13 1" />
          <path d="M4 12.500Q4.500 5.500 13 4.500M7 12.500q.5-4 6-5" />
          <circle cx="11.500" cy="11.500" r="1.500" fill="#fff" />
        </svg>
        <svg className="ml-2" width="17" height="14" viewBox="0 0 17 14" fill="none" stroke="#fff">
          <path d="M.5 4.500h2.500L6.500 1v12L3 9.500H.5zM9 5q1.500 2 0 4M11 3q3.500 4 0 8M13.500 1q5 6 0 12" />
        </svg>
        <div className="w-[70px] text-center text-[11px] leading-[18px]">
          <div>10:27 AM</div>
          <div>6/19/2021</div>
        </div>
        <button aria-label="Notifications" className="ml-2 mr-3 pt-1">
          <svg width="25" height="25" viewBox="0 0 25 25">
            <path fill="#fff" d="M0 1h17v13H8l-4 3v-3H0z" />
            <path stroke="#1b2a30" d="M3 4.500h11M3 7.500h11M3 10.500h6" />
            <circle cx="16" cy="16.500" r="8" fill="#3a4247" stroke="#8a9296" />
            <text x="16" y="21" fill="#fff" fontSize="12" textAnchor="middle">1</text>
          </svg>
        </button>
        <span className="w-1 h-full border-l border-[#6f797d]" />
      </div>
    </div>
  )
}

export default function App() {
  return (
    <div className="h-screen flex flex-col overflow-hidden font-['Open_Sans','Noto_Sans',sans-serif]">
      <TitleBar />
      <Ribbon />
      <main className="flex-1 min-h-0 flex bg-[#e6e6e6]">
        <div className="flex-1 flex justify-center gap-[12px] pr-0.5 overflow-hidden font-['Lato',sans-serif] [font-variant-ligatures:none] text-black">
          <AssignmentPage />
          <RubricPage />
        </div>
        <Scrollbar />
      </main>
      <StatusBar />
      <Taskbar />
    </div>
  )
}
